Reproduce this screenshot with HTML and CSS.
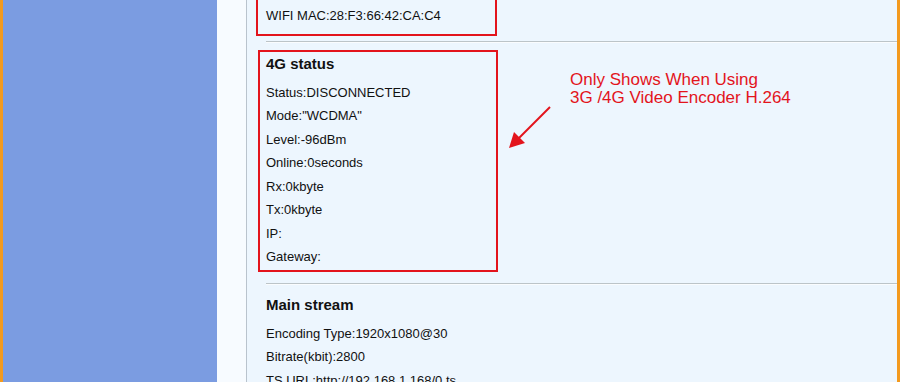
FILE: index.html
```html
<!DOCTYPE html>
<html lang="en">
<head>
    <meta charset="UTF-8">
    <meta name="viewport" content="width=device-width, initial-scale=1.0">
    <title>Device Status</title>
    <link rel="stylesheet" href="styles.css">
</head>
<body>
    <div class="page">
        <div class="edge"></div>
        <div class="sidebar"></div>
        <div class="gutter"></div>
        <div class="content">
            <div class="inner">
                <div class="box box-wifi">
                    <div class="item">WIFI MAC:28:F3:66:42:CA:C4</div>
                </div>
                <div class="sep sep-first"></div>
                <div class="box box-4g">
                    <h3>4G status</h3>
                    <div class="item">Status:DISCONNECTED</div>
                    <div class="item">Mode:"WCDMA"</div>
                    <div class="item">Level:-96dBm</div>
                    <div class="item">Online:0seconds</div>
                    <div class="item">Rx:0kbyte</div>
                    <div class="item">Tx:0kbyte</div>
                    <div class="item">IP:</div>
                    <div class="item">Gateway:</div>
                </div>
                <div class="sep sep-second"></div>
                <div class="section">
                    <h3>Main stream</h3>
                    <div class="item">Encoding Type:1920x1080@30</div>
                    <div class="item">Bitrate(kbit):2800</div>
                    <div class="item">TS URL:http://192.168.1.168/0.ts</div>
                </div>
            </div>

            <div class="note">
                Only Shows When Using<br>
                3G /4G Video Encoder H.264
            </div>
            <svg class="arrow" width="50" height="50" viewBox="0 0 50 50">
                <line x1="45" y1="3" x2="12" y2="36" stroke="#e3141c" stroke-width="2"/>
                <polygon points="4,44 9,28 20,39" fill="#e3141c"/>
            </svg>
        </div>
        <div class="edge"></div>
    </div>
</body>
</html>
```

FILE: styles.css
```css
body {
    margin: 0;
    font-family: "Liberation Sans", Arial, sans-serif;
    color: #111;
    overflow: hidden;
}
.page {
    display: flex;
    height: 382px;
    overflow: hidden;
}
.edge {
    width: 3px;
    background-color: #f39a1e;
}
.sidebar {
    width: 214px;
    background-color: #7b9ce1;
}
.gutter {
    width: 29px;
    background-color: #f7fbff;
    border-right: 1px solid #b9c3cd;
}
.content {
    flex: 1;
    position: relative;
    background-color: #edf6fe;
}
.inner {
    padding-left: 9px;
}
.box {
    border: 2px solid #e3141c;
}
.box-wifi {
    margin-top: -8px;
    padding: 10px 6px 6px 8px;
    width: 223px;
}
.box-4g {
    margin: 7px 0 0 2px;
    padding: 0 6px 1px 6px;
    width: 224px;
}
.item {
    font-size: 13px;
    line-height: 23.5px;
}
h3 {
    margin: 0 0 5px;
    font-size: 15px;
    line-height: 24px;
    font-weight: bold;
}
.sep {
    margin-left: 10px;
    border-top: 1px solid #bcc4c8;
    border-bottom: 1px solid #fafcfe;
}
.sep-first {
    margin-top: 5px;
}
.sep-second {
    margin-top: 11px;
}
.section {
    padding: 8px 0 0 10px;
}
.note {
    position: absolute;
    left: 323px;
    top: 71px;
    color: #e3141c;
    font-size: 17px;
    line-height: 18px;
}
.arrow {
    position: absolute;
    left: 258px;
    top: 104px;
}
```
